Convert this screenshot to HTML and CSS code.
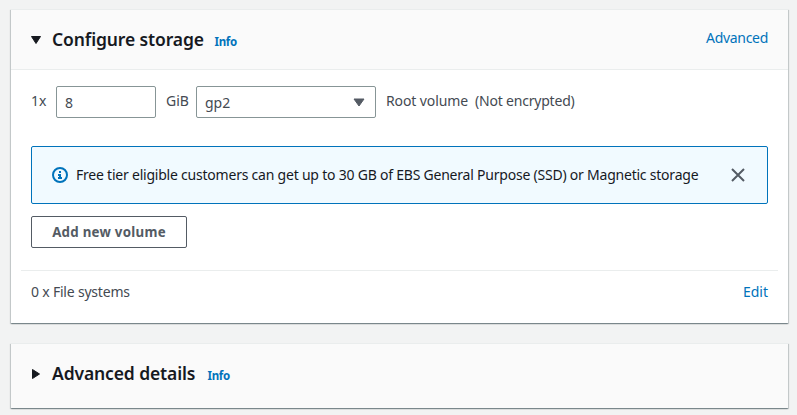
FILE: index.html
```html
<!DOCTYPE html>
<html lang="en">
<head>
<meta charset="utf-8">
<title>Configure storage</title>
<link rel="stylesheet" href="styles.css">
</head>
<body>
<main class="page">
  <section class="card storage">
    <header class="card-header">
      <svg class="caret" width="10" height="10" viewBox="0 0 10 10"><path d="M0.5 1.5h9L5 8.5z" fill="#16191f" stroke="#16191f" stroke-linejoin="round"/></svg>
      <h2 class="title title-storage">Configure storage</h2>
      <a class="info info-storage">Info</a>
      <a class="link advanced">Advanced</a>
    </header>
    <div class="body">
      <div class="volume">
        <span class="count">1x</span>
        <div class="input size">8</div>
        <span class="unit">GiB</span>
        <div class="input type"><span>gp2</span>
          <svg class="arrow" width="12" height="9" viewBox="0 0 12 9"><path d="M1 1h10L6 8z" fill="#545b64" stroke="#545b64" stroke-linejoin="round"/></svg>
        </div>
        <span class="root">Root volume</span>
        <span class="encryption">(Not encrypted)</span>
      </div>
      <div class="alert">
        <svg width="16" height="16" viewBox="0 0 16 16" fill="none" stroke="#0073bb" stroke-width="2"><circle cx="8" cy="8" r="7"/><path d="M8 12V8H6M6 11h4M8 4v2" /></svg>
        <span class="message">Free tier eligible customers can get up to 30 GB of EBS General Purpose (SSD) or Magnetic storage</span>
        <svg class="close" width="14" height="14" viewBox="0 0 14 14" fill="none" stroke="#545b64" stroke-width="2"><path d="M1 1l12 12M13 1L1 13"/></svg>
      </div>
      <button class="button"><span>Add new volume</span></button>
    </div>
    <footer class="files">
      <span class="files-text">0 x File systems</span>
      <a class="link edit">Edit</a>
    </footer>
  </section>
  <section class="card details">
    <svg class="caret" width="10" height="10" viewBox="0 0 10 10"><path d="M1.5 0.5v9L8.5 5z" fill="#16191f" stroke="#16191f" stroke-linejoin="round"/></svg>
    <h2 class="title title-details">Advanced details</h2>
    <a class="info">Info</a>
  </section>
</main>
</body>
</html>
```
FILE: styles.css
```css
* { box-sizing: border-box; }
body {
  margin: 0;
  background: #f2f3f3;
  color: #444a52;
  font: 14px/22px "Noto Sans", "Open Sans", sans-serif;
}
.page {
  display: flex;
  flex-direction: column;
  gap: 20px;
  padding: 9px 9px 6px 11px;
}
svg { display: block; flex: none; }
span, a, h2 { white-space: nowrap; }
.card {
  background: #fff;
  border-top: 1px solid #eaeded;
  box-shadow: 0 1px 1px 0 rgba(0, 28, 36, .3), 1px 1px 1px 0 rgba(0, 28, 36, .15), -1px 1px 1px 0 rgba(0, 28, 36, .15);
}
.storage { height: 314px; }
.card-header, .details {
  display: flex;
  align-items: center;
  height: 60px;
  padding: 0 20px;
}
.card-header { border-bottom: 1px solid #eaeded; }
.card-header, .details { background: #fafafa; }
.details { height: 65px; padding-bottom: 4px; }
.caret { margin-right: 11px; }
.title {
  margin: -2px 0 0;
  color: #16191f;
  font-size: 17.5px;
  line-height: 22px;
  font-weight: 600;
  letter-spacing: -0.12px;
}
.title-storage { width: 151px; }
.title-details { width: 144px; }
.info {
  margin: 3px 0 0 11.5px;
  color: #0073bb;
  font-size: 11.5px;
  font-weight: 700;
  line-height: 18px;
  letter-spacing: -0.3px;
}
.info-storage { margin-top: 5px; }
.link { color: #0073bb; }
.advanced { margin: -4px 0 0 auto; letter-spacing: -0.3px; }
.body { padding: 16px 20px 0; }
.volume { display: flex; align-items: center; height: 32px; }
.volume > span { margin-top: -2px; }
.count { width: 25px; }
.input {
  display: flex;
  align-items: center;
  height: 32px;
  padding: 1px 8px 0;
  border: 1px solid #879596;
  border-radius: 2px;
  background: #fff;
}
.size { width: 100px; margin-right: 10px; }
.unit { width: 30px; }
.type { width: 180px; justify-content: space-between; padding-right: 10px; }
.arrow { margin-top: -1px; }
.root { width: 89px; margin-left: 10px; letter-spacing: -0.1px; }
.encryption { letter-spacing: -0.2px; }
.alert {
  display: flex;
  align-items: center;
  height: 58px;
  margin-top: 28px;
  padding: 0 22px 0 20px;
  border: 1px solid #0073bb;
  border-radius: 2px;
  background: #f1faff;
}
.message { margin-left: 8px; color: #16191f; letter-spacing: -0.22px; }
.close { margin-left: auto; }
.button {
  display: block;
  width: 156px;
  height: 32px;
  margin-top: 12px;
  padding: 0;
  border: 1px solid #545b64;
  border-radius: 2px;
  background: #fff;
  color: #545b64;
  font: 700 13.3px/20px "Noto Sans", "Open Sans", sans-serif;
  letter-spacing: 0.26px;
}
.files {
  display: flex;
  justify-content: space-between;
  margin: 22px 10px 0;
  padding: 10px 10px 0;
  border-top: 1px solid #eaeded;
}
.files-text { letter-spacing: -0.2px; }
```
